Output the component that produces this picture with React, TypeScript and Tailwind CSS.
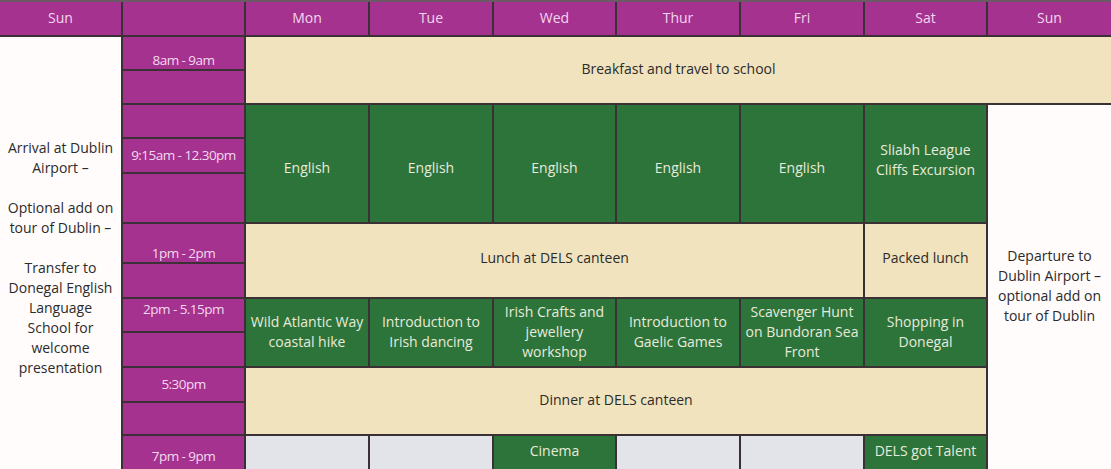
const days = ["Sun", "", "Mon", "Tue", "Wed", "Thur", "Fri", "Sat", "Sun"];

const timeRows: { row: string; label?: string; pad?: string }[] = [
  { row: "row-start-2", label: "8am - 9am", pad: "pt-[15px]" },
  { row: "row-start-3" },
  { row: "row-start-4" },
  { row: "row-start-5", label: "9:15am - 12.30pm" },
  { row: "row-start-6" },
  { row: "row-start-7", label: "1pm - 2pm", pad: "pt-[20px]" },
  { row: "row-start-8" },
  { row: "row-start-9", label: "2pm - 5.15pm", pad: "pb-[12px]" },
  { row: "row-start-10" },
  { row: "row-start-11", label: "5:30pm" },
  { row: "row-start-12" },
  { row: "row-start-13", label: "7pm - 9pm", pad: "self-start pt-[10px]" },
];

const english = [
  { col: "col-start-3", text: "English", pad: "pt-[8px]" },
  { col: "col-start-4", text: "English", pad: "pt-[8px]" },
  { col: "col-start-5", text: "English", pad: "pt-[8px]" },
  { col: "col-start-6", text: "English", pad: "pt-[8px]" },
  { col: "col-start-7", text: "English", pad: "pt-[8px]" },
  { col: "col-start-8", text: "Sliabh League Cliffs Excursion", pad: "pb-[8px]" },
];

const afternoon = [
  { col: "col-start-3", text: "Wild Atlantic Way coastal hike" },
  { col: "col-start-4", text: "Introduction to Irish dancing" },
  { col: "col-start-5", text: "Irish Crafts and jewellery workshop" },
  { col: "col-start-6", text: "Introduction to Gaelic Games" },
  { col: "col-start-7", text: "Scavenger Hunt on Bundoran Sea Front" },
  { col: "col-start-8", text: "Shopping in Donegal" },
];

const evening = [
  { col: "col-start-3", text: "" },
  { col: "col-start-4", text: "" },
  { col: "col-start-5", text: "Cinema" },
  { col: "col-start-6", text: "" },
  { col: "col-start-7", text: "" },
  { col: "col-start-8", text: "DELS got Talent" },
];

const green = "bg-[#2c743a] text-[#e9eadb] flex items-center justify-center text-center leading-5";
const beige = "bg-[#f1e3be] text-[#2b2b2b] flex items-center justify-center text-center leading-5";

export default function App() {
  return (
    <div
      className="w-[1111px] h-[469px] overflow-hidden bg-[#6b5a66] pt-[2px]"
      style={{ fontFamily: '"Open Sans", "Noto Sans", sans-serif' }}
    >
      <div className="grid gap-[2px] bg-[#3b3036] text-[14px] grid-cols-[121px_121px_122px_122px_121px_122px_122px_121px_1fr] grid-rows-[33px_32px_32px_32px_33px_48px_38px_33px_32px_33px_33px_31px_60px]">
        {days.map((d, i) => (
          <div
            key={i}
            className="row-start-1 bg-[#a5328f] text-[#f3d6ee] flex items-center justify-center pb-[3px]"
          >
            {d}
          </div>
        ))}

        {timeRows.map((t) => (
          <div
            key={t.row}
            className={`col-start-2 ${t.row} bg-[#a5328f] text-[#f3d9ee] text-[13.5px] tracking-[-0.04em] flex justify-center`}
          >
            {t.label && <span className={`${t.pad ?? ""} self-center`}>{t.label}</span>}
          </div>
        ))}

        <div className="col-start-1 row-start-2 row-end-14 bg-[#fffcfb] text-[#2b2b2b] flex flex-col items-center justify-center text-center leading-5 px-1 pb-[18px]">
          <p>Arrival at Dublin Airport –</p>
          <p className="mt-5">Optional add on tour of Dublin –</p>
          <p className="mt-5 px-1">Transfer to Donegal English Language School for welcome presentation</p>
        </div>

        <div className={`col-start-3 col-end-10 row-start-2 row-end-4 ${beige} pb-[3px]`}>
          Breakfast and travel to school
        </div>

        {english.map((e) => (
          <div key={e.col} className={`${e.col} row-start-4 row-end-7 ${green} px-1 ${e.pad}`}>
            {e.text}
          </div>
        ))}

        <div className="col-start-9 row-start-4 row-end-14 bg-[#fffcfb] text-[#2b2b2b] flex items-center justify-center text-center leading-5 px-2 pb-[30px]">
          Departure to Dublin Airport – optional add on tour of Dublin
        </div>

        <div className={`col-start-3 col-end-8 row-start-7 row-end-9 ${beige} pb-[6px]`}>
          Lunch at DELS canteen
        </div>
        <div className={`col-start-8 row-start-7 row-end-9 ${beige} pb-[6px]`}>Packed lunch</div>

        {afternoon.map((e) => (
          <div key={e.col} className={`${e.col} row-start-9 row-end-11 ${green} pb-[2px]`}>
            {e.text}
          </div>
        ))}

        <div className={`col-start-3 col-end-9 row-start-11 row-end-13 ${beige} pb-[3px]`}>
          Dinner at DELS canteen
        </div>

        {evening.map((e) =>
          e.text ? (
            <div
              key={e.col}
              className={`${e.col} row-start-13 bg-[#2c743a] text-[#e9eadb] text-center pt-[4px]`}
            >
              {e.text}
            </div>
          ) : (
            <div key={e.col} className={`${e.col} row-start-13 bg-[#e2e4ea]`} />
          )
        )}
      </div>
    </div>
  );
}
